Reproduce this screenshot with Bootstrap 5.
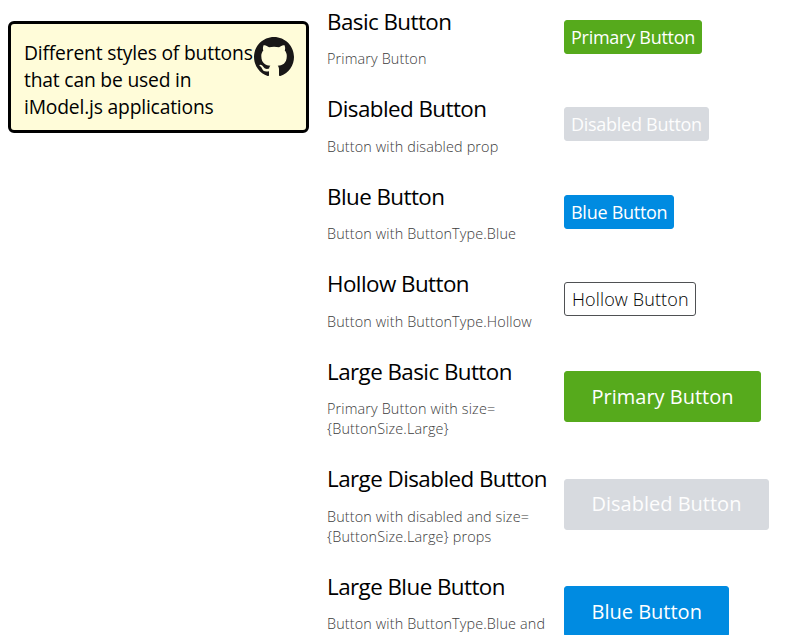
<!DOCTYPE html>
<html lang="en">
<head>
<meta charset="utf-8">
<meta name="viewport" content="width=device-width, initial-scale=1">
<title>Button styles</title>
<link href="https://cdn.jsdelivr.net/npm/bootstrap@5.3.0/dist/css/bootstrap.min.css" rel="stylesheet">
<style>
body{background:#fff;color:#000;font-family:"Open Sans","Noto Sans",sans-serif}
.page{height:635px}
.intro{width:301px;height:112px;margin:21px 18px 0 8px;padding:14px 12px 0 13px;border:3px solid #000;border-radius:6px;background:#fffcd9;font-size:19.3px;font-weight:400;letter-spacing:-.19px;line-height:27px}
.intro p{width:229px;padding-top:.5px;white-space:nowrap}
.mark-icon{width:40px;height:40px;margin-top:-1px;margin-left:1px}
.samples{padding-top:3px}
.sample{height:67.5px;margin-bottom:20px}
.sample.tall{height:87.5px}
.about{width:237px;white-space:nowrap}
.about h2{font-size:22.4px;line-height:35.5px;margin:0 0 9.75px;font-weight:400;letter-spacing:-.56px}
.about p{font-size:14.4px;line-height:20px;color:#3c3c3c;font-weight:300;letter-spacing:.14px;padding-bottom:.5px}
.act{--bs-btn-padding-x:6px;--bs-btn-padding-y:0px;--bs-btn-font-size:18px;--bs-btn-border-radius:3px;--bs-btn-disabled-opacity:1;height:34px;line-height:32px;letter-spacing:-.27px;white-space:nowrap}
.act-lg{--bs-btn-font-size:20px;--bs-btn-padding-x:26.5px;height:51px;line-height:48.5px;letter-spacing:0}
.green,.green:hover{background:#56aa1c;border-color:#56aa1c;color:#fff}
.blue,.blue:hover{background:#008be1;border-color:#008be1;color:#fff}
.act.off{background:#d7dadf;border-color:#d7dadf;color:#fdfdfd}
.hollow,.hollow:hover{background:#fff;border-color:#4f5154;color:#000;font-weight:300;padding-left:7px;letter-spacing:.13px}
</style>
<script src="https://cdn.jsdelivr.net/npm/bootstrap@5.3.0/dist/js/bootstrap.bundle.min.js"></script>
</head>
<body>
<main class="page d-flex align-items-start overflow-hidden">
  <aside class="intro d-flex align-items-start flex-shrink-0">
    <p class="mb-0 flex-shrink-0">Different styles of buttons<br>that can be used in<br>iModel.js applications</p>
    <svg class="mark-icon flex-shrink-0" viewBox="0 0 16 16" fill="#191717" aria-label="GitHub"><path d="M8 0C3.58 0 0 3.58 0 8c0 3.54 2.29 6.53 5.47 7.59.4.07.55-.17.55-.38 0-.19-.01-.82-.01-1.49-2.01.37-2.53-.49-2.69-.94-.09-.23-.48-.94-.82-1.13-.28-.15-.68-.52-.01-.53.63-.01 1.08.58 1.23.82.72 1.21 1.87.87 2.33.66.07-.52.28-.87.51-1.07-1.78-.2-3.64-.89-3.64-3.95 0-.87.31-1.59.82-2.15-.08-.2-.36-1.02.08-2.12 0 0 .67-.21 2.2.82.64-.18 1.32-.27 2-.27s1.36.09 2 .27c1.53-1.04 2.2-.82 2.2-.82.44 1.1.16 1.92.08 2.12.51.56.82 1.27.82 2.15 0 3.07-1.87 3.75-3.65 3.95.29.25.54.73.54 1.48 0 1.07-.01 1.93-.01 2.2 0 .21.15.46.55.38A8.01 8.01 0 0 0 16 8c0-4.42-3.58-8-8-8z"/></svg>
  </aside>
  <section class="samples flex-shrink-0">
    <div class="sample d-flex align-items-center">
      <div class="about"><h2>Basic Button</h2><p class="mb-0">Primary Button</p></div>
      <button class="btn act green">Primary Button</button>
    </div>
    <div class="sample d-flex align-items-center">
      <div class="about"><h2>Disabled Button</h2><p class="mb-0">Button with disabled prop</p></div>
      <button class="btn act off" disabled>Disabled Button</button>
    </div>
    <div class="sample d-flex align-items-center">
      <div class="about"><h2>Blue Button</h2><p class="mb-0">Button with ButtonType.Blue</p></div>
      <button class="btn act blue">Blue Button</button>
    </div>
    <div class="sample d-flex align-items-center">
      <div class="about"><h2>Hollow Button</h2><p class="mb-0">Button with ButtonType.Hollow</p></div>
      <button class="btn act hollow">Hollow Button</button>
    </div>
    <div class="sample tall d-flex align-items-center">
      <div class="about"><h2>Large Basic Button</h2><p class="mb-0">Primary Button with size=<br>{ButtonSize.Large}</p></div>
      <button class="btn act act-lg green">Primary Button</button>
    </div>
    <div class="sample tall d-flex align-items-center">
      <div class="about"><h2>Large Disabled Button</h2><p class="mb-0">Button with disabled and size=<br>{ButtonSize.Large} props</p></div>
      <button class="btn act act-lg off" disabled>Disabled Button</button>
    </div>
    <div class="sample tall d-flex align-items-center">
      <div class="about"><h2>Large Blue Button</h2><p class="mb-0">Button with ButtonType.Blue and<br>&nbsp;</p></div>
      <button class="btn act act-lg blue">Blue Button</button>
    </div>
  </section>
</main>
</body>
</html>
